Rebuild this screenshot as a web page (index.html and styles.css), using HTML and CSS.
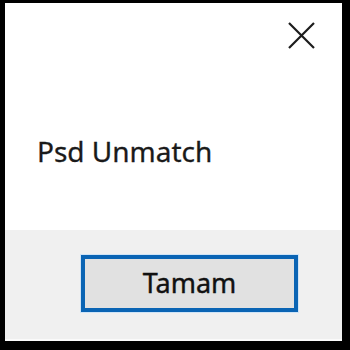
FILE: index.html
```html
<!DOCTYPE html>
<html>
<head>
<meta charset="utf-8">
<link rel="stylesheet" href="styles.css">
</head>
<body>
<div class="window">
  <div class="main">
    <div class="titlebar">
      <div class="close">
        <svg width="27" height="27" viewBox="0 0 27 27"><path d="M1 1 L26 26 M26 1 L1 26" stroke="#1c1c1c" stroke-width="2.2" fill="none"/></svg>
      </div>
    </div>
    <div class="message">Psd Unmatch</div>
  </div>
  <div class="footer">
    <button class="btn">Tamam</button>
  </div>
</div>
</body>
</html>
```
FILE: styles.css
```css
html, body {
  margin: 0;
  padding: 0;
}
body {
  width: 350px;
  height: 350px;
  background: #000;
  box-sizing: border-box;
  padding: 3px 8px 9px 5px;
  font-family: "Noto Sans", "Open Sans", sans-serif;
}
.window {
  width: 337px;
  height: 338px;
  display: flex;
  flex-direction: column;
  background: #fff;
  border-bottom: 2px solid #fafafa;
  box-sizing: border-box;
}
.main {
  height: 227px;
  background: #fff;
}
.titlebar {
  display: flex;
  justify-content: flex-end;
  padding: 19px 27px 0 0;
  height: 27px;
}
.close {
  width: 27px;
  height: 27px;
}
.close svg {
  display: block;
}
.message {
  margin: 88px 0 0 32px;
  font-size: 28px;
  line-height: 28px;
  color: #1a1a1a;
  -webkit-text-stroke: 0.3px #1a1a1a;
}
.footer {
  flex: 1;
  background: #f0f0f0;
  padding: 25px 44px 0 76px;
}
.btn {
  display: block;
  width: 217px;
  height: 57px;
  box-sizing: border-box;
  border: 4px solid #0a64b4;
  box-shadow: 0 0 0 1px #cfe4f7;
  background: #e1e1e1;
  font-family: "Noto Sans", "Open Sans", sans-serif;
  font-size: 27px;
  color: #111;
  -webkit-text-stroke: 0.4px #111;
  padding: 0 0 2px 0;
  margin: 0;
  line-height: 1;
}
```
